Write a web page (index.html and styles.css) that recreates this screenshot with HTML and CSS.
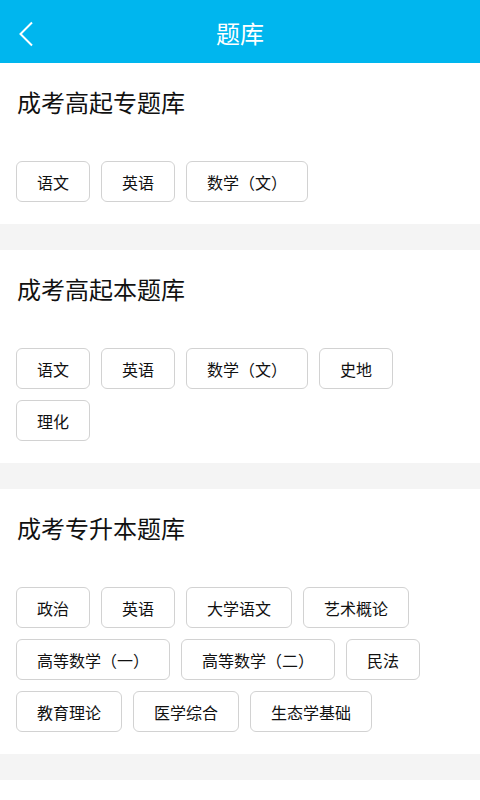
FILE: index.html
```html
<!DOCTYPE html>
<html lang="zh-CN">
<head>
<meta charset="utf-8">
<link rel="stylesheet" href="styles.css">
</head>
<body>
<header class="topbar">
  <span class="back">
    <svg width="16" height="26" viewBox="0 0 16 26"><path d="M14 1.5 L2.5 13 L14 24.5" fill="none" stroke="#fff" stroke-width="2"/></svg>
  </span>
  <h1 class="title">题库</h1>
</header>
<main>
  <section class="card">
    <h2 class="card-title">成考高起专题库</h2>
    <div class="chips">
      <span class="chip">语文</span>
      <span class="chip">英语</span>
      <span class="chip">数学（文）</span>
    </div>
  </section>
  <div class="sep"></div>
  <section class="card">
    <h2 class="card-title">成考高起本题库</h2>
    <div class="chips">
      <span class="chip">语文</span>
      <span class="chip">英语</span>
      <span class="chip">数学（文）</span>
      <span class="chip">史地</span>
      <span class="chip">理化</span>
    </div>
  </section>
  <div class="sep"></div>
  <section class="card">
    <h2 class="card-title">成考专升本题库</h2>
    <div class="chips">
      <span class="chip">政治</span>
      <span class="chip">英语</span>
      <span class="chip">大学语文</span>
      <span class="chip">艺术概论</span>
      <span class="chip">高等数学（一）</span>
      <span class="chip">高等数学（二）</span>
      <span class="chip">民法</span>
      <span class="chip">教育理论</span>
      <span class="chip">医学综合</span>
      <span class="chip">生态学基础</span>
    </div>
  </section>
  <div class="sep"></div>
  <section class="card empty"></section>
</main>
</body>
</html>
```
FILE: styles.css
```css
* { box-sizing: border-box; }
html, body { margin: 0; padding: 0; background: #fff; }
body {
  font-family: "Noto Sans CJK SC", "Noto Sans", sans-serif;
  color: #111;
  width: 480px;
  overflow: hidden;
}
.topbar {
  height: 63px;
  background: #00b6ee;
  display: flex;
  align-items: center;
  justify-content: center;
  position: relative;
}
.back {
  position: absolute;
  left: 18px;
  top: 21px;
  display: flex;
}
.title {
  margin: 0;
  font-size: 24px;
  font-weight: normal;
  color: #fff;
  line-height: 24px;
  padding-top: 3px;
}
.card {
  background: #fff;
  padding: 27px 16px 22px 16px;
}
.card.empty { height: 40px; }
.card-title {
  margin: 0;
  font-size: 24px;
  font-weight: normal;
  line-height: 24px;
  color: #111;
  padding-left: 1px;
}
.chips {
  margin-top: 47px;
  display: flex;
  flex-wrap: wrap;
  gap: 11px;
}
.chip {
  height: 41px;
  padding: 0 20px;
  border: 1.5px solid #d2d2d2;
  border-radius: 6px;
  display: inline-flex;
  align-items: center;
  font-size: 16px;
  line-height: 16px;
  color: #111;
}
.sep {
  height: 26px;
  background: #f4f4f4;
}
```
